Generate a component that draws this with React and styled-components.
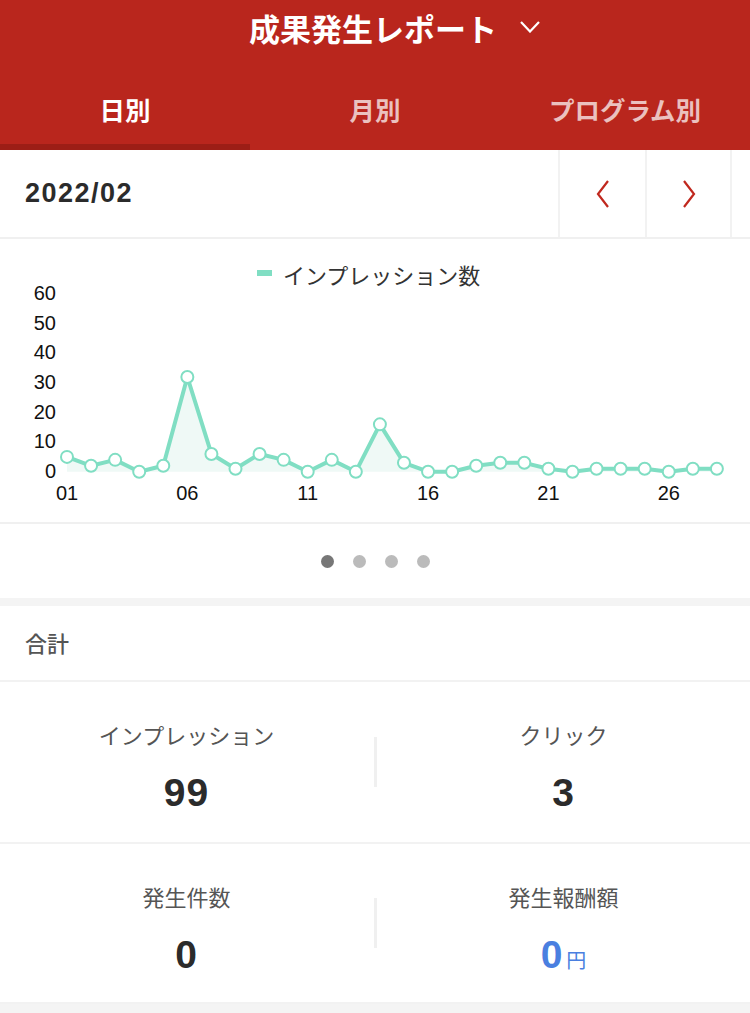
import React from "react";
import styled, { createGlobalStyle } from "styled-components";

const Global = createGlobalStyle`
  html, body { margin: 0; padding: 0; background: #f4f4f4; }
  body { font-family: "Liberation Sans", "Noto Sans CJK JP", sans-serif; }
  * { box-sizing: border-box; }
`;

const Page = styled.div`
  width: 750px;
  background: #f4f4f4;
`;

const Header = styled.header`
  background: #b9261d;
  color: #fff;
`;

const TitleRow = styled.div`
  height: 54px;
  display: flex;
  align-items: center;
  justify-content: center;
  gap: 23px;
  padding-left: 39px;
`;

const Title = styled.h1`
  margin: 0;
  font-family: "Noto Sans CJK JP", sans-serif;
  font-weight: 700;
  font-size: 31px;
  line-height: 1;
`;

const Tabs = styled.nav`
  display: grid;
  grid-template-columns: repeat(3, 1fr);
  height: 96px;
`;

const Tab = styled.div`
  display: flex;
  align-items: center;
  justify-content: center;
  padding: 22px 0 2px;
  font-family: "Noto Sans CJK JP", sans-serif;
  font-weight: 700;
  font-size: 25.5px;
  line-height: 1;
  color: ${(p) => (p.$active ? "#fff" : "rgba(255,255,255,0.72)")};
  border-bottom: 6px solid ${(p) => (p.$active ? "#9c1e16" : "transparent")};
`;

const DateBar = styled.div`
  height: 89px;
  background: #fff;
  border-bottom: 2px solid #f0f0f0;
  display: flex;
  align-items: stretch;
  padding-right: 18px;
`;

const DateLabel = styled.div`
  flex: 1;
  display: flex;
  align-items: center;
  padding-left: 25px;
  font-weight: 700;
  font-size: 27px;
  letter-spacing: 1.5px;
  color: #2b2b2b;
`;

const NavButton = styled.button`
  width: 87px;
  border: none;
  background: #fff;
  border-left: 2px solid #f2f2f2;
  border-right: ${(p) => (p.$last ? "2px solid #f2f2f2" : "none")};
  display: flex;
  align-items: center;
  justify-content: center;
  padding: 0;
  margin: 0;
`;

const ChartCard = styled.section`
  background: #fff;
  height: 285px;
  border-bottom: 2px solid #f0f0f0;
`;

const Pager = styled.div`
  background: #fff;
  height: 74px;
  display: flex;
  align-items: center;
  justify-content: center;
  gap: 19px;
  margin-bottom: 8px;
`;

const Dot = styled.span`
  width: 13px;
  height: 13px;
  border-radius: 50%;
  background: ${(p) => (p.$active ? "#777" : "#bbb")};
`;

const SectionHead = styled.div`
  background: #fff;
  height: 76px;
  display: flex;
  align-items: center;
  padding: 0 0 2px 25px;
  border-bottom: 2px solid #f2f2f2;
  font-family: "Noto Sans CJK JP", sans-serif;
  font-size: 22px;
  font-weight: 500;
  color: #555;
`;

const StatRow = styled.div`
  background: #fff;
  height: ${(p) => p.$h}px;
  display: grid;
  grid-template-columns: 1fr 4px 1fr;
  align-items: center;
  border-bottom: 2px solid #f2f2f2;
`;

const Divider = styled.div`
  width: 3px;
  height: 50px;
  background: #f0f0f0;
  justify-self: center;
`;

const Stat = styled.div`
  display: flex;
  flex-direction: column;
  align-items: center;
  gap: 28px;
  padding-top: ${(p) => p.$offset}px;
`;

const StatLabel = styled.div`
  font-family: "Noto Sans CJK JP", sans-serif;
  font-size: 22px;
  font-weight: 400;
  color: #555;
  line-height: 1;
`;

const StatValue = styled.div`
  font-weight: 700;
  font-size: 39px;
  letter-spacing: 1px;
  line-height: 1;
  color: ${(p) => p.$color || "#2b2b2b"};
  display: flex;
  align-items: baseline;
  gap: 3px;
`;

const Unit = styled.span`
  font-family: "Noto Sans CJK JP", sans-serif;
  font-weight: 400;
  font-size: 20px;
  letter-spacing: 0;
`;

const data = [5, 2, 4, 0, 2, 32, 6, 1, 6, 4, 0, 4, 0, 16, 3, 0, 0, 2, 3, 3, 1, 0, 1, 1, 1, 0, 1, 1];

const X0 = 67;
const DX = 24.07;
const BASE = 232.7;
const UNIT = 2.96;
const LINE = "#80dec3";

function Chart() {
  const pts = data.map((v, i) => [X0 + i * DX, BASE - v * UNIT]);
  const line = pts.map((p) => p.join(",")).join(" ");
  const area = `${X0},${BASE} ${line} ${pts[pts.length - 1][0]},${BASE}`;
  const ticks = [0, 10, 20, 30, 40, 50, 60];
  const xl = [1, 6, 11, 16, 21, 26];
  return (
    <svg width="750" height="283" viewBox="0 0 750 283">
      <rect x="257" y="31" width="15" height="6" fill={LINE} />
      <text
        x="283"
        y="35"
        dominantBaseline="central"
        fontFamily="'Noto Sans CJK JP', sans-serif"
        fontSize="22"
        fill="#333"
      >
        インプレッション数
      </text>
      {ticks.map((t) => (
        <text
          key={t}
          x="56"
          y={BASE - t * UNIT - 1}
          textAnchor="end"
          dominantBaseline="central"
          fontFamily="'Liberation Sans', sans-serif"
          fontSize="20"
          fill="#111"
        >
          {t}
        </text>
      ))}
      {xl.map((d) => (
        <text
          key={d}
          x={X0 + (d - 1) * DX}
          y="254"
          textAnchor="middle"
          dominantBaseline="central"
          fontFamily="'Liberation Sans', sans-serif"
          fontSize="20"
          fill="#111"
        >
          {String(d).padStart(2, "0")}
        </text>
      ))}
      <polygon points={area} fill="#eff9f6" />
      <polyline points={line} fill="none" stroke={LINE} strokeWidth="4" strokeLinejoin="round" />
      {pts.map(([x, y], i) => (
        <circle key={i} cx={x} cy={y} r="6" fill="#fff" stroke={LINE} strokeWidth="2" />
      ))}
    </svg>
  );
}

const Chevron = ({ dir }) => (
  <svg width="16" height="28" viewBox="0 0 16 28">
    <path
      d={dir === "left" ? "M13 1 L3 14 L13 27" : "M3 1 L13 14 L3 27"}
      fill="none"
      stroke="#c0281e"
      strokeWidth="2.2"
    />
  </svg>
);

export default function App() {
  return (
    <Page>
      <Global />
      <Header>
        <TitleRow>
          <Title>成果発生レポート</Title>
          <svg width="20" height="12" viewBox="0 0 20 12">
            <path d="M1 1 L10 10.5 L19 1" fill="none" stroke="#fff" strokeWidth="2.2" />
          </svg>
        </TitleRow>
        <Tabs>
          <Tab $active>日別</Tab>
          <Tab>月別</Tab>
          <Tab>プログラム別</Tab>
        </Tabs>
      </Header>
      <DateBar>
        <DateLabel>2022/02</DateLabel>
        <NavButton aria-label="前へ">
          <Chevron dir="left" />
        </NavButton>
        <NavButton $last aria-label="次へ">
          <Chevron dir="right" />
        </NavButton>
      </DateBar>
      <ChartCard>
        <Chart />
      </ChartCard>
      <Pager>
        <Dot $active />
        <Dot />
        <Dot />
        <Dot />
      </Pager>
      <SectionHead>合計</SectionHead>
      <StatRow $h={162}>
        <Stat $offset={10}>
          <StatLabel>インプレッション</StatLabel>
          <StatValue>99</StatValue>
        </Stat>
        <Divider />
        <Stat $offset={10}>
          <StatLabel>クリック</StatLabel>
          <StatValue>3</StatValue>
        </Stat>
      </StatRow>
      <StatRow $h={160}>
        <Stat $offset={13}>
          <StatLabel>発生件数</StatLabel>
          <StatValue>0</StatValue>
        </Stat>
        <Divider />
        <Stat $offset={13}>
          <StatLabel>発生報酬額</StatLabel>
          <StatValue $color="#4a7fe0">
            0<Unit>円</Unit>
          </StatValue>
        </Stat>
      </StatRow>
      <div style={{ height: 10 }} />
    </Page>
  );
}
